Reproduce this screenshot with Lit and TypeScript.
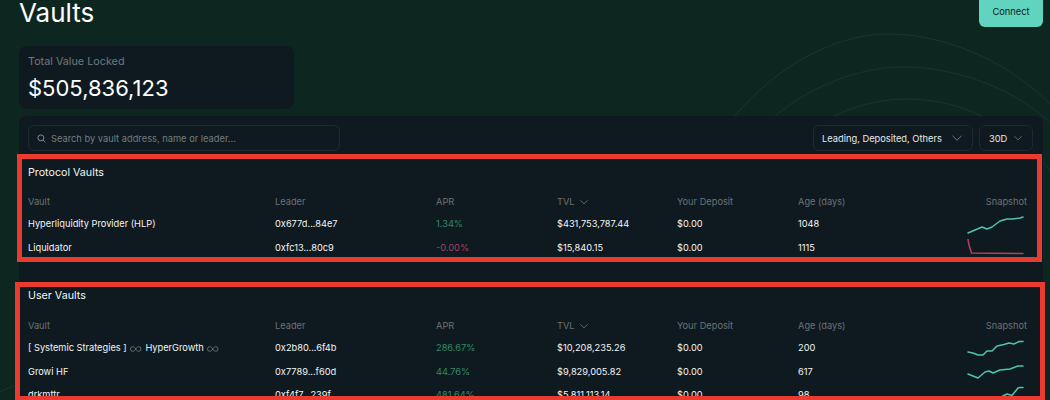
import { LitElement, html, css, svg } from "lit";
import { customElement } from "lit/decorators.js";

type Row = { name: unknown; leader: string; apr: string; neg?: boolean; tvl: string; dep: string; age: string; spark: string };

const infinity = html`<svg class="inf" viewBox="0 0 12 6" width="11.500" height="6" aria-hidden="true"><path d="M6 3C5 1.200 4 .6 2.900 .6A2.400 2.400 0 0 0 2.900 5.400C4 5.400 5 4.800 6 3C7 1.200 8 .6 9.100 .6A2.400 2.400 0 0 1 9.100 5.400C8 5.400 7 4.800 6 3Z" fill="none" stroke="currentColor" stroke-width=".9"/></svg>`;

const chevron = (size: number) => html`<svg class="chev" width=${size} height=${size} viewBox="0 0 12 12" aria-hidden="true"><path d="M1.500 3.800 6 8.200l4.500-4.400" fill="none" stroke="currentColor" stroke-width="1"/></svg>`;

const protocol: Row[] = [
  { name: "Hyperliquidity Provider (HLP)", leader: "0x677d...84e7", apr: "1.34%", tvl: "$431,753,787.44", dep: "$0.00", age: "1048",
    spark: "2,21 9,18 16,15 21,17 26,15 30,12 34,9 41,7 47,7 54,6 57,5" },
  { name: "Liquidator", leader: "0xfc13...80c9", apr: "-0.00%", neg: true, tvl: "$15,840.15", dep: "$0.00", age: "1115",
    spark: "2,4.500 3,10 5.500,18 57,18.500" },
];

const user: Row[] = [
  { name: html`[ Systemic Strategies ] ${infinity} HyperGrowth ${infinity}`, leader: "0x2b80...6f4b", apr: "286.67%", tvl: "$10,208,235.26", dep: "$0.00", age: "200",
    spark: "2,16 7,17 12,19 17,19 21,15 26,15 31,10 38,8.500 43,7 48,8 53,5.500 57,5.500" },
  { name: "Growi HF", leader: "0x7789...f60d", apr: "44.76%", tvl: "$9,829,005.82", dep: "$0.00", age: "617",
    spark: "2,15 7,17 12,19 19,13 23,12 27,14 34,11 44,10 52,7 57,7" },
  { name: "drkmttr", leader: "0xf4f7...239f", apr: "481.64%", tvl: "$5,811,113.14", dep: "$0.00", age: "98",
    spark: "2,24 14,21 29,14 36,13.500 41,11 46,12.500 52,5 54,4.500 57,4.500" },
];

@customElement("app-root")
export class AppRoot extends LitElement {
  static styles = css`
    :host {
      display: block;
      position: relative;
      width: 1050px;
      height: 400px;
      overflow: hidden;
      background: #0e2620;
      font-family: Inter, "Noto Sans", sans-serif;
      color: #f2f5f5;
    }
    .bg { position: absolute; inset: 0; }
    .bg path { fill: none; stroke: #1a3430; stroke-width: 1; }
    .page { position: relative; padding: 0 7px 0 19px; }
    .top { display: flex; justify-content: space-between; align-items: flex-start; height: 46px; }
    h1 { margin: 0; font-size: 26px; font-weight: 400; line-height: 25px; color: #fff; }
    .connect {
      box-sizing: border-box; width: 64px; height: 32px; margin-top: -5px;
      display: flex; align-items: center; justify-content: center;
      background: #61d4c0; color: #0c2024; border-radius: 6px; font-size: 9.300px;
    }
    .tvl {
      box-sizing: border-box; width: 275px; height: 63px; padding: 9px;
      background: #0f1a20; border-radius: 8px; margin-bottom: 7px;
    }
    .tvl-label { font-size: 10.800px; line-height: 13px; color: #6f787b; }
    .tvl-value { font-size: 22px; line-height: 28px; margin-top: 6px; color: #fff; }
    .panel { background: #0f1a20; border-radius: 8px 8px 0 0; padding: 9px 16px 0 9px; height: 284px; }
    .toolbar { display: flex; align-items: stretch; height: 26px; gap: 6px; }
    .field {
      box-sizing: border-box; border: 1px solid #1e2a30; border-radius: 6px;
      display: flex; align-items: center; font-size: 9.300px;
    }
    .search { width: 312px; padding-left: 8px; gap: 5px; color: #737c7f; margin-right: auto; }
    .search svg { color: #8a9396; flex: none; }
    .sel { justify-content: space-between; color: #e6eaea; padding: 0 9px; }
    .sel .chev { color: #6f787b; }
    .sel-a { width: 160px; padding-left: 8px; }
    .sel-b { width: 54px; margin-right: -6px; }
    h2 { margin: 0; font-size: 10.700px; font-weight: 400; line-height: 16px; color: #f2f5f5; }
    .s1 { margin-top: 14px; }
    .s2 { margin-top: 29px; }
    .grid {
      display: grid;
      grid-template-columns: 247px 161px 121px 120px 121px 1fr 60px;
      grid-template-rows: 20px;
      grid-auto-rows: 23.5px;
      margin-top: 11px;
      font-size: 9.250px;
      align-items: center;
    }
    .s2 + .grid { margin-top: 12px; }
    .head { display: contents; }
    .head > div { height: 20px; line-height: 20px; color: #6a7276; }
    .sort { display: flex; align-items: center; gap: 4px; }
    .sort .chev { color: #6a7276; }
    .head > .right { text-align: right; white-space: nowrap; justify-self: end; }
    .name { white-space: pre; }
    .inf { color: #6f787b; vertical-align: -0.5px; margin: 0 1px; }
    .pos { color: #2f8a6a; }
    .neg { color: #a83f5c; }
    .spark { display: block; justify-self: end; margin-right: 3px; }
    .spark polyline { fill: none; stroke-width: 1.500; stroke-linejoin: round; stroke-linecap: round; }
    .spark .up { stroke: #4cc4b0; }
    .spark .down { stroke: #b5405f; }
    .mark { position: absolute; box-sizing: border-box; border: 5px solid #ea3b30; pointer-events: none; }
    .m1 { left: 17px; top: 154px; width: 1025px; height: 108px; }
    .m2 { left: 15px; top: 282px; width: 1030px; height: 119px; }
  `;

  private table(rows: Row[]) {
    return html`<div class="grid">
      <div class="head">
        <div>Vault</div><div>Leader</div><div>APR</div>
        <div class="sort">TVL ${chevron(10)}</div>
        <div>Your Deposit</div><div>Age (days)</div>
        <div class="right">Snapshot</div>
      </div>
      ${rows.map(
        (r) => html`
          <div class="name">${r.name}</div>
          <div>${r.leader}</div>
          <div class=${r.neg ? "neg" : "pos"}>${r.apr}</div>
          <div>${r.tvl}</div>
          <div>${r.dep}</div>
          <div>${r.age}</div>
          <svg class="spark" width="58" height="24" viewBox="0 0 58 24" aria-hidden="true">
            ${svg`<polyline class=${r.neg ? "down" : "up"} points=${r.spark}></polyline>`}
          </svg>
        `
      )}
    </div>`;
  }

  render() {
    return html`
      <svg class="bg" width="1050" height="400" aria-hidden="true">
        <path d="M735 116C782 60 842 34 887 34C952 34 1012 66 1050 104" />
        <path d="M775 116C812 85 862 67 902 67C962 67 1017 92 1050 122" />
        <path d="M834 116C857 105 882 99 907 99C962 99 1012 125 1050 170" />
        <path d="M0 392Q8 388 15 385" />
      </svg>
      <div class="page">
        <div class="top">
          <h1>Vaults</h1>
          <div class="connect">Connect</div>
        </div>
        <div class="tvl">
          <div class="tvl-label">Total Value Locked</div>
          <div class="tvl-value">$505,836,123</div>
        </div>
        <div class="panel">
          <div class="toolbar">
            <div class="field search">
              <svg width="9" height="9" viewBox="0 0 10 10" aria-hidden="true"><circle cx="4.300" cy="4.300" r="3.300" fill="none" stroke="currentColor" stroke-width="1"/><path d="M6.800 6.800 9.300 9.300" stroke="currentColor" stroke-width="1"/></svg>
              Search by vault address, name or leader...
            </div>
            <div class="field sel sel-a">Leading, Deposited, Others ${chevron(12)}</div>
            <div class="field sel sel-b">30D ${chevron(10)}</div>
          </div>
          <h2 class="s1">Protocol Vaults</h2>
          ${this.table(protocol)}
          <h2 class="s2">User Vaults</h2>
          ${this.table(user)}
        </div>
      </div>
      <div class="mark m1"></div>
      <div class="mark m2"></div>
    `;
  }
}
